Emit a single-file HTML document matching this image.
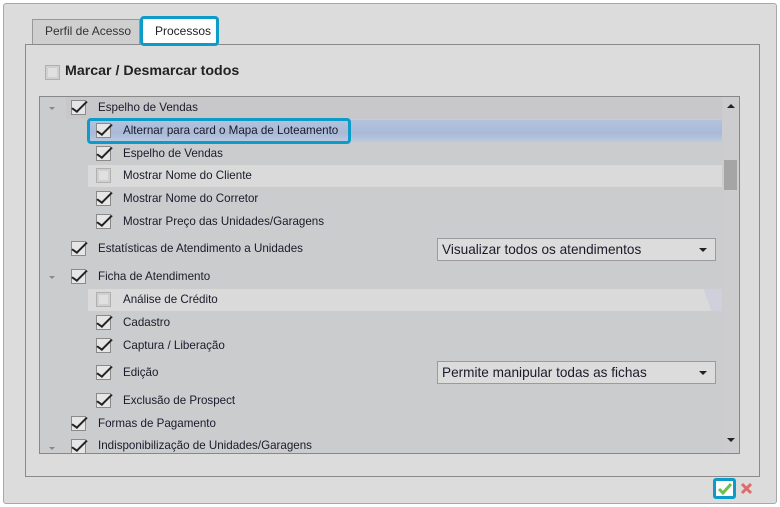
<!DOCTYPE html>
<html><head><meta charset="utf-8"><style>
*{margin:0;padding:0;box-sizing:border-box}
body{width:780px;height:507px;background:#fff;font-family:"Liberation Sans",sans-serif;font-size:12px;color:#1a1a2a;position:relative;overflow:hidden}
.a{position:absolute}
.win{left:3px;top:3px;width:774px;height:501px;background:#dcdcdc;border:1px solid #a8a8a8;border-radius:3px}
.cb{position:absolute;width:15px;height:15px;background:#e6e6e6;border:1px solid #8a8a8a}
.cb.c::after{content:"";position:absolute;left:4px;top:-3px;width:5px;height:13px;border-right:2px solid #222;border-bottom:2px solid #222;transform:rotate(35deg) skewX(-10deg)}
.cb.u{background:#e0e0e0;border-color:#b0b0b0;box-shadow:inset 0 0 0 2px #d0d0d0}
.t{position:absolute;font-size:11.6px;white-space:nowrap}
.arr{position:absolute;width:0;height:0;border-left:3px solid transparent;border-right:3px solid transparent;border-top:3px solid #888}
.sel{position:absolute;left:437px;width:279px;height:23px;background:#dcdcdc;border:1px solid #9a9aa0;font-size:13.6px;padding:3px 4px}
.sel::after{content:"";position:absolute;right:8px;top:9px;border-left:4px solid transparent;border-right:4px solid transparent;border-top:4px solid #222}
</style></head><body>
<div class="a win"></div>
<div class="a" style="left:32px;top:19px;width:108px;height:26px;background:#cfcfcf;border:1px solid #999;border-bottom:none"></div>
<div class="t" style="left:45px;top:24px;color:#333;font-size:12px">Perfil de Acesso</div>
<div class="a" style="left:25px;top:44px;width:735px;height:433px;border:1px solid #8a8a8a;background:#dcdcdc"></div>
<div class="a" style="left:140px;top:16px;width:79px;height:30px;background:#fff;border:3px solid #0d9bc9;border-radius:4px"></div>
<div class="t" style="left:155px;top:24px;color:#222;font-size:12px">Processos</div>
<div class="cb u" style="left:45px;top:65px"></div>
<div class="t" style="left:65px;top:63px;font-weight:bold;font-size:14.2px;color:#222">Marcar / Desmarcar todos</div>

<div class="a" style="left:39px;top:96px;width:701px;height:358px;border:1px solid #888;background:#cbccce;overflow:hidden">
 <div class="a" style="left:26px;top:0;width:656px;height:22px;background:#c8c8ca"></div>
 <div class="a" style="left:48px;top:23px;width:634px;height:22px;background:linear-gradient(#b3c3dd,#a9bad8 60%,#bccbe0)"></div>
 <div class="a" style="left:48px;top:68px;width:634px;height:22px;background:#dadada"></div>
 <div class="a" style="left:48px;top:192px;width:634px;height:22px;background:linear-gradient(70deg,#dadada 0,#dadada 97%,#cfd0dc 97.2%)"></div>
 <div class="a" style="left:683px;top:0;width:17px;height:356px;background:#cdcdcf"></div>
 <div class="a" style="left:684px;top:63px;width:13px;height:30px;background:#a5a5a5"></div>
 <div class="a" style="left:687px;top:7px;border-left:4px solid transparent;border-right:4px solid transparent;border-bottom:4px solid #222"></div>
 <div class="a" style="left:687px;top:341px;border-left:4px solid transparent;border-right:4px solid transparent;border-top:4px solid #222"></div>
</div>

<div class="arr" style="left:49px;top:107px"></div>
<div class="cb c" style="left:71px;top:100px"></div><div class="t" style="left:98px;top:101px">Espelho de Vendas</div>
<div class="a" style="left:87px;top:118px;width:264px;height:26px;border:3px solid #0d9bc9;border-radius:4px"></div>
<div class="cb c" style="left:96px;top:123px"></div><div class="t" style="left:123px;top:124px">Alternar para card o Mapa de Loteamento</div>
<div class="cb c" style="left:96px;top:146px"></div><div class="t" style="left:123px;top:147px">Espelho de Vendas</div>
<div class="cb u" style="left:96px;top:168px"></div><div class="t" style="left:123px;top:169px">Mostrar Nome do Cliente</div>
<div class="cb c" style="left:96px;top:191px"></div><div class="t" style="left:123px;top:192px">Mostrar Nome do Corretor</div>
<div class="cb c" style="left:96px;top:214px"></div><div class="t" style="left:123px;top:215px">Mostrar Preço das Unidades/Garagens</div>
<div class="cb c" style="left:71px;top:241px"></div><div class="t" style="left:98px;top:242px">Estatísticas de Atendimento a Unidades</div>
<div class="sel" style="top:238px">Visualizar todos os atendimentos</div>
<div class="arr" style="left:49px;top:276px"></div>
<div class="cb c" style="left:71px;top:269px"></div><div class="t" style="left:98px;top:270px">Ficha de Atendimento</div>
<div class="cb u" style="left:96px;top:292px"></div><div class="t" style="left:123px;top:293px">Análise de Crédito</div>
<div class="cb c" style="left:96px;top:315px"></div><div class="t" style="left:123px;top:316px">Cadastro</div>
<div class="cb c" style="left:96px;top:338px"></div><div class="t" style="left:123px;top:339px">Captura / Liberação</div>
<div class="cb c" style="left:96px;top:365px"></div><div class="t" style="left:123px;top:366px">Edição</div>
<div class="sel" style="top:361px">Permite manipular todas as fichas</div>
<div class="cb c" style="left:96px;top:393px"></div><div class="t" style="left:123px;top:394px">Exclusão de Prospect</div>
<div class="cb c" style="left:71px;top:416px"></div><div class="t" style="left:98px;top:417px">Formas de Pagamento</div>
<div class="a" style="left:40px;top:436px;width:682px;height:17px;overflow:hidden">
 <div class="arr" style="left:9px;top:11px"></div>
 <div class="cb c" style="left:31px;top:3px"></div><div class="t" style="left:58px;top:3px">Indisponibilização de Unidades/Garagens</div>
</div>

<div class="a" style="left:713px;top:478px;width:23px;height:21px;border:3px solid #0d9bc9;border-radius:3px;background:#fff"></div>
<svg class="a" style="left:717px;top:481px" width="16" height="15"><path d="M2 8 L6 12 L14 3" stroke="#6cbf4a" stroke-width="3" fill="none"/></svg>
<svg class="a" style="left:740px;top:482px" width="13" height="13"><path d="M2 2 L11 11 M11 2 L2 11" stroke="#e06a6a" stroke-width="3"/></svg>
</body></html>
